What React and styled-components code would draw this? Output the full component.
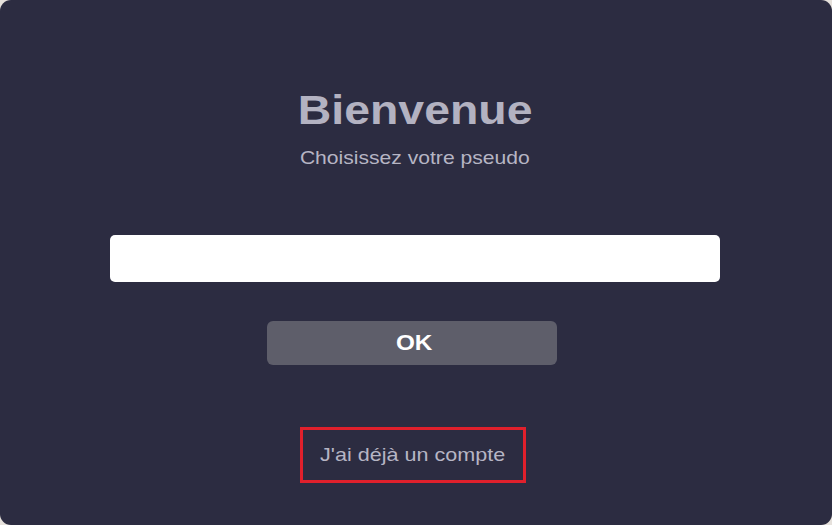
import React from "react";
import styled, { createGlobalStyle } from "styled-components";

const Global = createGlobalStyle`
  html, body {
    margin: 0;
    padding: 0;
    width: 832px;
    height: 525px;
    overflow: hidden;
    background: #e6e1dc;
  }
  * { box-sizing: border-box; }
`;

const Window = styled.div`
  width: 832px;
  height: 525px;
  background: #2c2c41;
  border-radius: 11px;
  display: flex;
  flex-direction: column;
  align-items: center;
  padding: 86px 2px 0 0;
  font-family: "Liberation Sans", Arial, sans-serif;
`;

const Title = styled.h1`
  margin: 0;
  font-size: 40px;
  line-height: 48px;
  font-weight: 700;
  color: #b3b2c1;
  transform: scaleX(1.16);
`;

const Subtitle = styled.p`
  margin: 12px 0 0;
  font-size: 18.5px;
  line-height: 24px;
  color: #b6b5c4;
  transform: scaleX(1.14);
`;

const Input = styled.input`
  margin-top: 65px;
  width: 610px;
  height: 47px;
  border: none;
  border-radius: 5px;
  background: #ffffff;
  outline: none;
  padding: 0 12px;
  font-size: 18px;
  font-family: inherit;
`;

const Button = styled.button`
  margin: 39px 6px 0 0;
  width: 290px;
  height: 44px;
  border: none;
  border-radius: 6px;
  background: #5e5e6a;
  color: #ffffff;
  font-family: inherit;
  font-size: 21.5px;
  font-weight: 700;
  display: flex;
  align-items: center;
  justify-content: center;
  padding: 0 0 0 5px;
`;

const ButtonLabel = styled.span`
  display: inline-block;
  transform: scaleX(1.13);
`;

const LinkBox = styled.div`
  margin: 62px 4px 0 0;
  width: 226px;
  height: 56px;
  border: 3px solid #e0202c;
  display: flex;
  align-items: center;
  justify-content: center;
  font-size: 19px;
  line-height: 24px;
  color: #b6b5c4;
`;

const LinkLabel = styled.span`
  display: inline-block;
  white-space: nowrap;
  transform: scaleX(1.135);
`;

export default function App() {
  return (
    <>
      <Global />
      <Window>
        <Title>Bienvenue</Title>
        <Subtitle>Choisissez votre pseudo</Subtitle>
        <Input type="text" />
        <Button>
          <ButtonLabel>OK</ButtonLabel>
        </Button>
        <LinkBox>
          <LinkLabel>J'ai déjà un compte</LinkLabel>
        </LinkBox>
      </Window>
    </>
  );
}
